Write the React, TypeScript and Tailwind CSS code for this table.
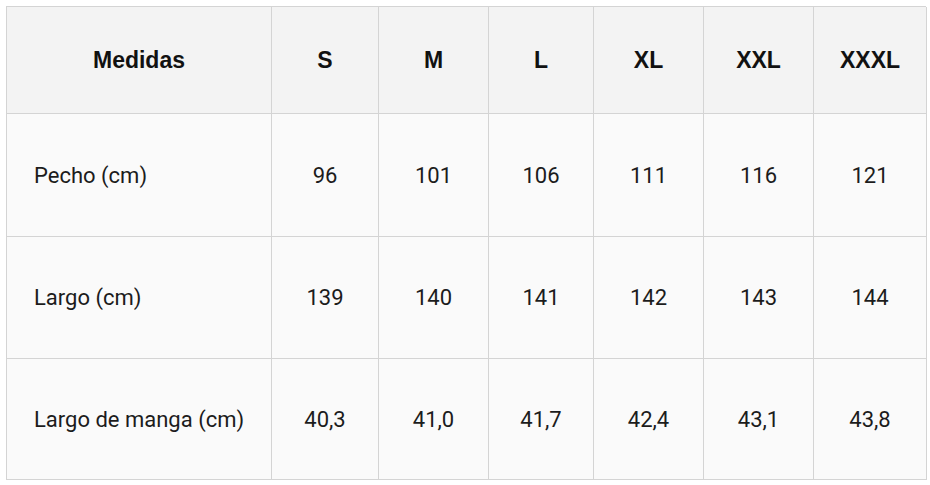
import React from 'react'

const sizes = ['S', 'M', 'L', 'XL', 'XXL', 'XXXL']

const rows = [
  { label: 'Pecho (cm)', values: ['96', '101', '106', '111', '116', '121'] },
  { label: 'Largo (cm)', values: ['139', '140', '141', '142', '143', '144'] },
  { label: 'Largo de manga (cm)', values: ['40,3', '41,0', '41,7', '42,4', '43,1', '43,8'] },
]

export default function App() {
  return (
    <div className="w-[930px] h-[485px] bg-white p-[6px]">
      <div className="grid grid-cols-[265px_107px_110px_105px_110px_110px_113px] grid-rows-[107px_123px_122px_121px] w-[920px] border-t border-l border-[#d4d4d4] text-[#1c1c1c]">
        <div className="flex items-center justify-center bg-[#f3f3f3] border-r border-b border-[#d4d4d4] font-bold text-[23px] font-['Liberation_Sans',Arial,sans-serif] text-[#111]">
          Medidas
        </div>
        {sizes.map((s) => (
          <div
            key={s}
            className="flex items-center justify-center bg-[#f3f3f3] border-r border-b border-[#d4d4d4] font-bold text-[23px] font-['Liberation_Sans',Arial,sans-serif] text-[#111]"
          >
            {s}
          </div>
        ))}
        {rows.map((r) => (
          <React.Fragment key={r.label}>
            <div className="flex items-center pl-[27px] bg-[#fafafa] border-r border-b border-[#d4d4d4] text-[22px] font-['Roboto',sans-serif]">
              {r.label}
            </div>
            {r.values.map((v, i) => (
              <div
                key={i}
                className="flex items-center justify-center bg-[#fafafa] border-r border-b border-[#d4d4d4] text-[22px] font-['Roboto',sans-serif]"
              >
                {v}
              </div>
            ))}
          </React.Fragment>
        ))}
      </div>
    </div>
  )
}
